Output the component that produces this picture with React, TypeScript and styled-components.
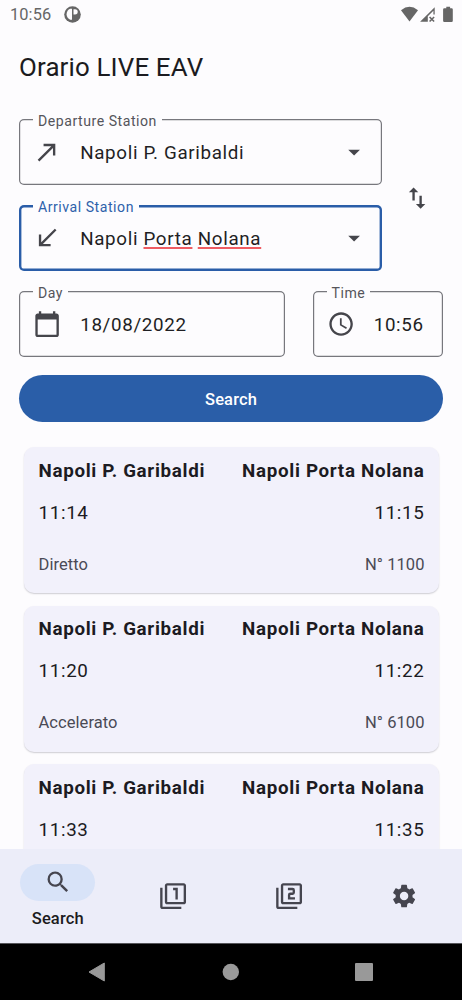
import React from 'react';
import styled, { createGlobalStyle } from 'styled-components';
import {
  MdArrowDropDown,
  MdCalendarToday,
  MdCallMade,
  MdCallReceived,
  MdFilter1,
  MdFilter2,
  MdSchedule,
  MdSearch,
  MdSettings,
  MdSwapVert,
} from 'react-icons/md';

const GlobalStyle = createGlobalStyle`
  *, *::before, *::after { box-sizing: border-box; }
  body {
    margin: 0;
    background: #fdfcfe;
    color: #1b1b20;
    font-family: Roboto, sans-serif;
  }
  svg { display: block; flex: none; }
`;

const Screen = styled.div`
  display: flex;
  flex-direction: column;
  width: 462px;
  height: 1000px;
  overflow: hidden;
`;

const StatusBar = styled.header`
  display: flex;
  align-items: center;
  height: 29px;
  padding: 0 8px 0 10px;
  color: #666;
`;

const Clock = styled.span`
  flex: 1;
  display: flex;
  align-items: center;
  gap: 13px;
  font-size: 16.4px;
  line-height: 30px;
  letter-spacing: 0.1px;
`;

const Title = styled.h1`
  margin: 0;
  padding: 0 19px;
  height: 76px;
  font-size: 25.9px;
  font-weight: 400;
  line-height: 76px;
  letter-spacing: 0.15px;
`;

const Form = styled.form`
  display: flex;
  flex-direction: column;
  padding: 14px 19px 0;
`;

const StationRow = styled.div`
  display: flex;
  align-items: center;
  gap: 21px;
`;

const Stations = styled.div`
  display: flex;
  flex-direction: column;
  gap: 20px;
  width: 363px;
`;

const DateRow = styled.div`
  display: flex;
  justify-content: space-between;
  margin-top: 20px;
`;

const FieldBox = styled.div<{ $active?: boolean; $width: number }>`
  position: relative;
  display: flex;
  align-items: center;
  gap: 19px;
  width: ${(p) => p.$width}px;
  height: 65.5px;
  margin-bottom: 0.5px;
  padding: 0 14px;
  border-radius: 5px;
  box-shadow: inset 0 0 0 ${(p) => (p.$active ? '2.4px #2a5da8' : '1.2px #77777d')};
  color: #45454b;
`;

const FieldLabel = styled.label<{ $active?: boolean }>`
  position: absolute;
  top: -7px;
  left: 14px;
  padding: 0 5px;
  background: #fdfcfe;
  font-size: 14.1px;
  line-height: 18px;
  letter-spacing: 0.53px;
  color: ${(p) => (p.$active ? '#2f62ab' : '#55555b')};
`;

const FieldValue = styled.span`
  flex: 1;
  padding-top: 2px;
  font-size: 18.8px;
  line-height: 24px;
  letter-spacing: 0.66px;
  white-space: nowrap;
  color: #1f1f24;
`;

const Misspelled = styled.span`
  text-decoration: underline #ef5c62 2.4px;
  text-underline-offset: 2px;
  text-decoration-skip-ink: none;
`;

const IconButton = styled.button`
  border: 0;
  padding: 0;
  background: none;
  color: #45454b;
  margin-top: 7px;
`;

const SearchButton = styled.button`
  height: 47px;
  margin-top: 18px;
  border: 0;
  border-radius: 24px;
  background: #2a5ea8;
  color: #fff;
  font: 500 16.5px/47px Roboto, sans-serif;
  letter-spacing: 0.12px;
`;

const Results = styled.main`
  flex: 1;
  min-height: 0;
  overflow: hidden;
  display: flex;
  flex-direction: column;
  gap: 12.5px;
  padding: 25.2px 23.5px 0;
`;

const Card = styled.article`
  flex: none;
  display: flex;
  flex-direction: column;
  height: 146px;
  padding: 11.4px 14px 0 15px;
  border-radius: 10px;
  background: #f2f1fb;
  box-shadow: 0 1px 1.5px rgba(40, 40, 60, 0.22);
`;

const CardRow = styled.div<{ $kind: 'station' | 'time' | 'detail' }>`
  display: flex;
  justify-content: space-between;
  line-height: 24px;
  font-size: ${(p) => (p.$kind === 'detail' ? 16.5 : 18.8)}px;
  font-weight: ${(p) => (p.$kind === 'station' ? 700 : 400)};
  letter-spacing: ${(p) => ({ station: 0.68, time: 0.66, detail: 0.06 })[p.$kind]}px;
  color: ${(p) => (p.$kind === 'detail' ? '#4a4a55' : '#1c1b22')};
  margin-top: ${(p) => ({ station: 0, time: 18.4, detail: 27.6 })[p.$kind]}px;
`;

const BottomNav = styled.nav`
  flex: none;
  display: grid;
  grid-template-columns: repeat(4, 1fr);
  height: 94px;
  background: #ecedf9;
`;

const NavItem = styled.a`
  display: flex;
  flex-direction: column;
  align-items: center;
  justify-content: center;
  padding-top: 1px;
  color: #45454f;
  font-size: 16.5px;
  font-weight: 500;
  line-height: 20px;
  letter-spacing: 0.12px;
`;

const Pill = styled.span`
  display: flex;
  align-items: center;
  justify-content: center;
  width: 75px;
  height: 37px;
  margin-bottom: 8px;
  border-radius: 19px;
  background: #d8e3f8;
`;

const NavLabel = styled.span`
  color: #1b1b20;
`;

const SystemNav = styled.footer`
  flex: none;
  display: flex;
  align-items: center;
  justify-content: space-between;
  height: 57px;
  padding: 0 89px 0 88px;
  background: #000;
  border-top: 1px solid #55555a;
`;

const NotificationIcon = () => (
  <svg width="17" height="17" viewBox="0 0 17 17">
    <circle cx="8.5" cy="8.5" r="8.3" fill="#666" />
    <path d="M8 2.8v10.9H6.2C3.9 12.8 2.6 10.8 2.6 8.3S4 3.6 6.2 2.8z" fill="#fdfcfe" />
    <path d="M9.5 3.2h1.6a2.6 2.6 0 0 1 0 5.2H9.5z" fill="#fdfcfe" />
  </svg>
);

const StatusIcons = () => (
  <svg width="54" height="17" viewBox="0 0 54 17" fill="#666">
    <path d="M1 4.3Q9.5-2.6 18 4.3L9.5 15.6z" />
    <path d="M20.1 15.8 34.7 1.2v7.4h-1.3V4.7l-5.6 5.6v5.5z" />
    <path d="m29.6 11 4.5 4.5m0-4.5-4.5 4.5" stroke="#666" strokeWidth="1.6" />
    <path d="M44.3 2.2h2V.8h3.8v1.4h1.5q1.2 0 1.2 1.2v11.4q0 1.2-1.2 1.2h-7.3q-1.2 0-1.2-1.2V3.4q0-1.2 1.2-1.2z" />
  </svg>
);

interface Trip {
  dep: string;
  arr: string;
  type?: string;
  number?: string;
}

const trips: Trip[] = [
  { dep: '11:14', arr: '11:15', type: 'Diretto', number: '1100' },
  { dep: '11:20', arr: '11:22', type: 'Accelerato', number: '6100' },
  { dep: '11:33', arr: '11:35' },
];

interface FieldProps {
  label: string;
  icon: React.ReactNode;
  children: React.ReactNode;
  width: number;
  active?: boolean;
  menu?: boolean;
}

const Field = ({ label, icon, children, width, active, menu }: FieldProps) => (
  <FieldBox $active={active} $width={width}>
    <FieldLabel $active={active}>{label}</FieldLabel>
    {icon}
    <FieldValue>{children}</FieldValue>
    {menu && <MdArrowDropDown size={28.2} />}
  </FieldBox>
);

export default function App() {
  return (
    <Screen>
      <GlobalStyle />
      <StatusBar>
        <Clock>
          10:56
          <NotificationIcon />
        </Clock>
        <StatusIcons />
      </StatusBar>
      <Title>Orario LIVE EAV</Title>
      <Form>
        <StationRow>
          <Stations>
            <Field label="Departure Station" icon={<MdCallMade size={28.2} />} width={363} menu>
              Napoli P. Garibaldi
            </Field>
            <Field label="Arrival Station" icon={<MdCallReceived size={28.2} />} width={363} active menu>
              Napoli <Misspelled>Porta</Misspelled> <Misspelled>Nolana</Misspelled>
            </Field>
          </Stations>
          <IconButton type="button" aria-label="Swap stations">
            <MdSwapVert size={28.2} />
          </IconButton>
        </StationRow>
        <DateRow>
          <Field label="Day" icon={<MdCalendarToday size={28.2} />} width={265.5}>
            18/08/2022
          </Field>
          <Field label="Time" icon={<MdSchedule size={28.2} />} width={130.5}>
            10:56
          </Field>
        </DateRow>
        <SearchButton type="button">Search</SearchButton>
      </Form>
      <Results>
        {trips.map((trip) => (
          <Card key={trip.dep}>
            <CardRow $kind="station">
              <span>Napoli P. Garibaldi</span>
              <span>Napoli Porta Nolana</span>
            </CardRow>
            <CardRow $kind="time">
              <span>{trip.dep}</span>
              <span>{trip.arr}</span>
            </CardRow>
            {trip.type && (
              <CardRow $kind="detail">
                <span>{trip.type}</span>
                <span>N° {trip.number}</span>
              </CardRow>
            )}
          </Card>
        ))}
      </Results>
      <BottomNav>
        <NavItem>
          <Pill>
            <MdSearch size={28.2} />
          </Pill>
          <NavLabel>Search</NavLabel>
        </NavItem>
        <NavItem>
          <MdFilter1 size={28.2} />
        </NavItem>
        <NavItem>
          <MdFilter2 size={28.2} />
        </NavItem>
        <NavItem>
          <MdSettings size={28.2} />
        </NavItem>
      </BottomNav>
      <SystemNav>
        <svg width="17" height="20" viewBox="0 0 17 20">
          <path d="M1 10 16.3 1v18z" fill="#999" stroke="#999" strokeLinejoin="round" />
        </svg>
        <svg width="18" height="18" viewBox="0 0 18 18">
          <circle cx="9.8" cy="9" r="8.2" fill="#999" />
        </svg>
        <svg width="18" height="18" viewBox="0 0 18 18">
          <rect width="18" height="18" rx="1" fill="#999" />
        </svg>
      </SystemNav>
    </Screen>
  );
}
